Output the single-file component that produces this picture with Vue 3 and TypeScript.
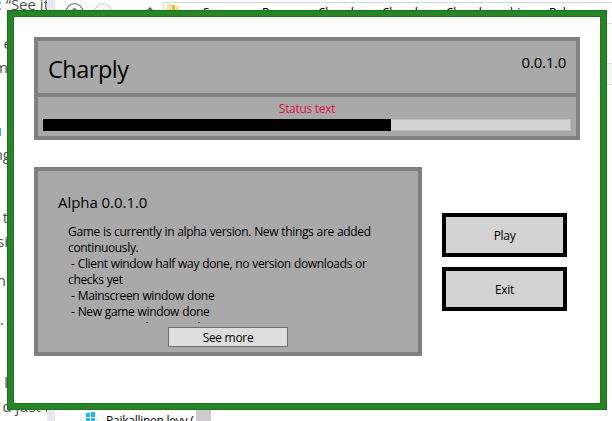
<script setup lang="ts">
interface Fragment {
  text: string
  right: number
  baseline: number
  link?: boolean
}

const pageLines: Fragment[] = [
  { text: ': “See it', right: 49, baseline: 10 },
  { text: 'e', right: 12, baseline: 49 },
  { text: 'm', right: 8, baseline: 73 },
  { text: 'u', right: 2, baseline: 136, link: true },
  { text: 'ng', right: 11, baseline: 160 },
  { text: 't', right: 8, baseline: 223 },
  { text: 'si', right: 8, baseline: 247 },
  { text: 'n', right: 6, baseline: 286 },
  { text: '.', right: 4, baseline: 325 },
  { text: 't l', right: 8, baseline: 388 },
  { text: 'd just r', right: 51, baseline: 412 },
]

const crumbs = [
  { text: 'Source', x: 203 },
  { text: 'Repos', x: 262 },
  { text: 'Charply', x: 318 },
  { text: 'Charply', x: 382 },
  { text: 'Charply', x: 446 },
  { text: 'bin', x: 510 },
  { text: 'Release', x: 549 },
]

const version = '0.0.1.0'
const progress = 66
const notes = [
  'Game is currently in alpha version. New things are added',
  'continuously.',
  ' - Client window half way done, no version downloads or',
  'checks yet',
  ' - Mainscreen window done',
  ' - New game window done',
  ' - Options window 50% done',
]
</script>

<template>
  <div class="desktop">
    <div class="page">
      <span
        v-for="(line, i) in pageLines"
        :key="i"
        class="fragment"
        :class="{ link: line.link }"
        :style="{ right: 47 - line.right + 'px', top: line.baseline - 16 + 'px' }"
      >{{ line.text }}</span>
    </div>
    <div class="explorer">
      <svg class="toolbar" width="140" height="16" viewBox="55 0 140 16">
        <circle cx="74.500" cy="12" r="8.300" fill="none" stroke="#777" stroke-width="1.200" />
        <path d="M71 12l3.500-3.500 3.500 3.500" fill="none" stroke="#777" stroke-width="1.500" />
        <circle cx="103" cy="12" r="8.300" fill="none" stroke="#d0d0d0" stroke-width="1.200" />
        <path d="M106 12l-3-3" fill="none" stroke="#ccc" stroke-width="1.500" />
        <path d="M146 11l4-4 4 4z" fill="#666" />
        <path d="M195 2.500h-31.500V16" fill="none" stroke="#ccdcd8" />
        <path d="M167 4h6l1 2h5v8h-12z" fill="#f2e49a" />
        <path d="M172 5h3v9h-3z" fill="#d9bf4b" />
      </svg>
      <div class="address"></div>
      <span v-for="(c, i) in crumbs" :key="i" class="crumb" :style="{ left: c.x - 55 + 'px' }">{{ c.text }}</span>
      <div class="side-strip"></div>
      <svg class="drive" width="18" height="12" viewBox="0 0 18 12">
        <path d="M0 1h4v4H0zM5 0h4v5H5zM0 6h4v4H0zM5 6h4v4H5z" fill="#18bdea" />
        <path d="M10 8l4 1v3h-4z" fill="#c4cacd" />
      </svg>
      <span class="drive-name">Paikallinen levy (</span>
      <div class="scroll"></div>
    </div>

    <main class="window">
      <header class="panel header">
        <div class="title-row">
          <h1>Charply</h1>
          <span class="version">{{ version }}</span>
        </div>
        <div class="status">
          <span class="status-text">Status text</span>
          <div class="track"><div class="fill" :style="{ width: progress + '%' }"></div></div>
        </div>
      </header>
      <div class="content">
        <section class="panel news">
          <h2>Alpha {{ version }}</h2>
          <div class="notes"><p v-for="(n, i) in notes" :key="i">{{ n }}</p></div>
          <button class="more">See more</button>
        </section>
        <nav class="actions">
          <button>Play</button>
          <button>Exit</button>
        </nav>
      </div>
    </main>
  </div>
</template>

<style>
body { margin: 0; overflow: hidden; }
</style>

<style scoped>
* { box-sizing: border-box; }
h1, h2, p { margin: 0; font-weight: 400; }
.desktop {
  position: relative; width: 612px; height: 421px; overflow: hidden;
  background: #fff; color: #000; font-family: "Open Sans", "Noto Sans", sans-serif;
}
.page { position: absolute; left: 0; top: 0; width: 47px; height: 421px; overflow: hidden; }
.fragment {
  position: absolute; font-size: 15px; line-height: 21px; white-space: pre; color: #505050;
}
.fragment.link { color: #4778b8; }
.explorer {
  position: absolute; left: 47px; top: 0; width: 565px; height: 421px;
  border-left: 8px solid #e8e8ee; background: #fff; overflow: hidden;
}
.toolbar { position: absolute; left: 0; top: 0; }
.address { position: absolute; left: 140px; right: 0; top: 2px; height: 1px; background: #ccdcd8; }
.crumb {
  position: absolute; top: 4px; font-size: 12px; line-height: 17px; letter-spacing: -0.2px;
}
.side-strip {
  position: absolute; right: 0; top: 23px; width: 6px; height: 62px;
  border-top: 1px solid #ddd; border-bottom: 1px solid #ddd;
  background: linear-gradient(#fff 39px, #ddd 39px, #ddd 40px, #f5f5f5 40px);
}
.drive { position: absolute; left: 31px; top: 412px; }
.drive-name {
  position: absolute; left: 51px; top: 412px; font-size: 12px; line-height: 17px;
  letter-spacing: -0.25px; white-space: nowrap;
}
.scroll { position: absolute; left: 141px; top: 410px; width: 15px; height: 11px; background: #cdcbcd; }
.window {
  position: absolute; left: 7px; top: 10px; width: 600px; height: 400px;
  padding: 26px; border: 1px solid #1d711d; background: #fff;
  box-shadow: inset 0 0 0 5px #278427, inset 0 0 0 6px #267026;
}
.panel { border: 4px solid #808080; background: #a9a9a9; }
.header { width: 546px; height: 103px; }
.title-row {
  display: flex; justify-content: space-between; height: 56px;
  padding: 10px 10px 0; border-bottom: 4px solid #808080;
}
h1 { font-size: 23.500px; line-height: 36px; letter-spacing: -0.5px; }
.version { font-size: 15px; line-height: 23px; letter-spacing: -0.25px; }
.status { display: flex; flex-direction: column; padding: 2px 5px 0; }
.status-text {
  height: 20px; line-height: 20px; font-size: 12px; text-align: center; color: #dc143c;
  letter-spacing: -0.3px;
}
.track { height: 12px; border: 1px solid #bcbcbc; border-left: 0; background: #d3d3d3; }
.fill { height: 12px; margin-top: -1px; background: #000; }
.content { display: flex; gap: 20px; margin-top: 27px; }
.news { display: flex; flex-direction: column; width: 388px; height: 189px; padding: 20px 20px 0; }
h2 { font-size: 15px; line-height: 22px; letter-spacing: -0.05px; }
.notes {
  height: 99px; margin: 11px 10px 0; overflow: hidden;
  font-size: 12px; line-height: 16px; letter-spacing: -0.34px; word-spacing: 0.3px; white-space: pre;
}
button {
  padding: 0; font: inherit; font-size: 12px; letter-spacing: -0.3px; color: #000;
  text-align: center;
}
.more {
  flex: none; width: 120px; height: 20px; margin: 4px 0 0 110px;
  border: 1px solid #707070; background: #ddd; line-height: 20px;
}
.actions { display: flex; flex-direction: column; gap: 10px; margin-top: 46px; }
.actions button {
  width: 125px; height: 44px; border: 4px solid #000; background: #d3d3d3;
}
</style>
